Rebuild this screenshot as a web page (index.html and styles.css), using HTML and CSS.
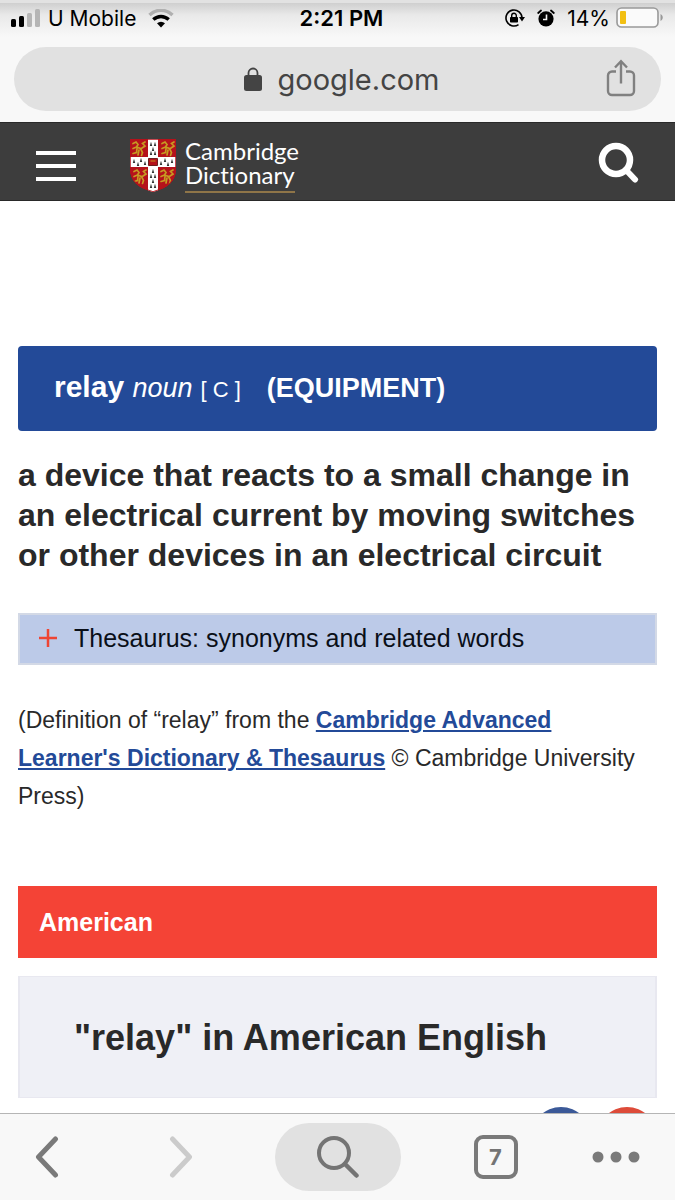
FILE: index.html
```html
<!DOCTYPE html>
<html lang="en">
<head>
    <meta charset="UTF-8">
    <meta name="viewport" content="width=device-width, initial-scale=1.0">
    <title>relay | Cambridge Dictionary</title>
    <link rel="stylesheet" href="styles.css">
</head>
<body>
    <div class="browser-top">
        <div class="status">
            <div class="status-left">
                <svg width="30" height="18" viewBox="0 0 30 18">
                    <rect x="0" y="10" width="5" height="8" rx="1.500"/>
                    <rect x="8" y="7" width="5" height="11" rx="1.500"/>
                    <rect x="16" y="4" width="5" height="14" rx="1.500" fill="#b5b5b5"/>
                    <rect x="24" y="0" width="5" height="18" rx="1.500" fill="#b5b5b5"/>
                </svg>
                <span class="carrier">U Mobile</span>
                <svg width="26" height="19" viewBox="0 0 26 19" fill="none">
                    <path d="M1.500 6C8 -.3 18 -.3 24.500 6" stroke="#b0b0b0" stroke-width="3.400"/>
                    <path d="M5.300 10.600c4.600-4.200 10.800-4.200 15.400 0" stroke="#000" stroke-width="3.400"/>
                    <path d="M9 14.300c2.500-2 5.500-2 8 0L13 18.500z" fill="#000"/>
                </svg>
            </div>
            <span class="time">2:21 PM</span>
            <div class="status-right">
                <svg width="20" height="18" viewBox="0 0 20 18">
                    <path d="M13.500 15.600A8 8 0 1 1 17 9" fill="none" stroke="#000" stroke-width="1.600"/>
                    <path d="M14 8h6l-3 4.500z"/>
                    <rect x="5" y="8" width="8" height="5.500" rx=".8"/>
                    <path d="M6.700 8.500V6.600a2.300 2.300 0 0 1 4.600 0v1.900" fill="none" stroke="#000" stroke-width="1.400"/>
                </svg>
                <svg class="alarm" width="18" height="18" viewBox="0 0 18 18">
                    <circle cx="9" cy="9.800" r="7.600"/>
                    <path d="M1.200 4 4 1.500M16.800 4 14 1.500" stroke="#000" stroke-width="1.800" stroke-linecap="round"/>
                    <path d="M9.500 5.500v5H6" fill="none" stroke="#f2f2f2" stroke-width="1.600"/>
                </svg>
                <span class="percent">14%</span>
                <svg width="48" height="22" viewBox="0 0 48 22">
                    <rect x="1" y="1" width="41" height="19" rx="4.500" fill="#fafafa" stroke="#999" stroke-width="1.600"/>
                    <rect x="4" y="4" width="6" height="13" rx="1" fill="#f2bf12"/>
                    <path d="M44.500 7c3 1.500 3 5.500 0 7z" fill="#999"/>
                </svg>
            </div>
        </div>
        <div class="address">
            <a href="#" class="url">
                <svg width="18" height="24" viewBox="0 0 18 24">
                    <rect x="0" y="8" width="18" height="16" rx="2.500" fill="#444"/>
                    <path d="M4.500 9V6a4.500 4.500 0 0 1 9 0v3" fill="none" stroke="#444" stroke-width="1.800"/>
                </svg>
                google.com
            </a>
            <button class="share" aria-label="Share">
                <svg width="30" height="38" viewBox="0 0 30 38" fill="none" stroke="#808080" stroke-width="2.400">
                    <path d="M10 12.500H6a4 4 0 0 0-4 4V32a4 4 0 0 0 4 4h18a4 4 0 0 0 4-4V16.500a4 4 0 0 0-4-4h-4"/>
                    <path d="M15 24.500V2.500M9 8.500l6-6.300 6 6.300"/>
                </svg>
            </button>
        </div>
    </div>

    <div class="page">
        <header class="header">
            <button class="menu" aria-label="Menu"><i></i><i></i><i></i></button>
            <a href="#" class="logo">
                <svg width="46" height="53" viewBox="0 0 46 53">
                    <defs>
                        <clipPath id="shield"><path d="M0 0h46v30c0 12-8 19-23 23C8 49 0 42 0 30z"/></clipPath>
                        <g id="lion" fill="none" stroke="#c79a22" stroke-width="1.700" stroke-linecap="round">
                            <path d="M2 3.500 5 2l2 2.500-1.500 2.500 4 1.500 2 4-1 3M5.500 7 2 8.500M6 8.500l-.5 4L2 13.500M8 10l-1 5M11 8l3-2-2.500-2.500L14 2"/>
                        </g>
                        <path id="spot" d="M0-2.200 1.200 2H-1.200z" fill="#333"/>
                    </defs>
                    <g clip-path="url(#shield)">
                        <path fill="#b5121b" d="M0 0h46v53H0z"/>
                        <use href="#lion" x="1" y="1"/>
                        <use href="#lion" x="30" y="1"/>
                        <use href="#lion" x="2" y="29"/>
                        <use href="#lion" x="29" y="29"/>
                        <path fill="#fff" d="M18 0h10v53H18zM0 18h46v10H0z"/>
                        <use href="#spot" x="21" y="5"/><use href="#spot" x="25" y="5"/>
                        <use href="#spot" x="23" y="10"/>
                        <use href="#spot" x="21" y="14"/><use href="#spot" x="25" y="14"/>
                        <use href="#spot" x="4" y="22"/><use href="#spot" x="8" y="25"/>
                        <use href="#spot" x="11" y="21"/><use href="#spot" x="15" y="24"/>
                        <use href="#spot" x="31" y="24"/><use href="#spot" x="35" y="21"/>
                        <use href="#spot" x="38" y="25"/><use href="#spot" x="42" y="22"/>
                        <use href="#spot" x="23" y="32"/>
                        <use href="#spot" x="21" y="37"/><use href="#spot" x="25" y="37"/>
                        <use href="#spot" x="23" y="42"/>
                        <use href="#spot" x="21" y="47"/><use href="#spot" x="25" y="47"/>
                        <path fill="#b5121b" stroke="#6d2020" d="M18.500 19.500h9v7h-9z"/>
                        <path stroke="#c79a22" d="M20.500 22h5"/>
                        <path fill="none" stroke="#b5121b" stroke-width="1.500" d="M0 0h46v30c0 12-8 19-23 23C8 49 0 42 0 30z"/>
                    </g>
                </svg>
                <span class="logo-text">
                    <span>Cambridge</span>
                    <span class="underline">Dictionary</span>
                </span>
            </a>
            <button class="find" aria-label="Search">
                <svg width="42" height="42" viewBox="0 0 42 42" fill="none" stroke="#fff">
                    <circle cx="19" cy="19" r="14" stroke-width="6.500"/>
                    <path d="m29 29 9 9.500" stroke-width="6" stroke-linecap="round"/>
                </svg>
            </button>
        </header>

        <main class="entry">
            <h2 class="sense">
                <span class="word">relay <em>noun</em></span>
                <span class="gram">[ <small>C</small> ]</span>
                <span class="guide">(EQUIPMENT)</span>
            </h2>
            <p class="definition">a device that reacts to a small change in an electrical current by moving switches or other devices in an electrical circuit</p>
            <button class="thesaurus">
                <svg width="18" height="18" viewBox="0 0 18 18" stroke="#ee4534" stroke-width="2.500"><path d="M9 0v18M0 9h18"/></svg>
                Thesaurus: synonyms and related words
            </button>
            <p class="source">(Definition of “relay” from the <a href="#">Cambridge Advanced Learner's Dictionary &amp; Thesaurus</a> © Cambridge University Press)</p>
            <div class="region">American</div>
            <h1 class="title">"relay" in American English</h1>
            <div class="social">
                <a href="#" class="facebook" aria-label="Facebook"></a>
                <a href="#" class="google" aria-label="Google"></a>
            </div>
        </main>
    </div>

    <nav class="toolbar">
        <button aria-label="Back">
            <svg width="24" height="42" viewBox="0 0 24 42" fill="none" stroke="#7a7a7a" stroke-width="5" stroke-linecap="round" stroke-linejoin="round"><path d="M20.500 3 3.500 21l17 18"/></svg>
        </button>
        <button aria-label="Forward">
            <svg width="24" height="42" viewBox="0 0 24 42" fill="none" stroke="#cbcbcb" stroke-width="5" stroke-linecap="round" stroke-linejoin="round"><path d="m3.500 3 17 18-17 18"/></svg>
        </button>
        <button class="search" aria-label="Search or type URL">
            <svg width="42" height="42" viewBox="0 0 42 42" fill="none" stroke="#747474">
                <circle cx="17" cy="17" r="15" stroke-width="4"/>
                <path d="m28 28 11.500 11.500" stroke-width="4.500" stroke-linecap="round"/>
            </svg>
        </button>
        <button aria-label="7 open tabs"><span class="tabs">7</span></button>
        <button aria-label="More">
            <svg width="48" height="12" viewBox="0 0 48 12" fill="#7a7a7a"><circle cx="6" cy="6" r="5.500"/><circle cx="24" cy="6" r="5.500"/><circle cx="42" cy="6" r="5.500"/></svg>
        </button>
    </nav>
</body>
</html>
```
FILE: styles.css
```css
* {
    box-sizing: border-box;
}

body {
    display: flex;
    flex-direction: column;
    height: 100vh;
    margin: 0;
    background-color: #fff;
    color: #292929;
    font-family: "Liberation Sans", Arial, sans-serif;
}

h1, h2, p {
    margin: 0;
}

button {
    border: none;
    padding: 0;
    background: none;
    font: inherit;
    cursor: pointer;
}

svg {
    display: block;
    flex-shrink: 0;
}

.browser-top {
    flex-shrink: 0;
    border-top: 3px solid #e2e2e2;
    padding: 0 14px 11px;
    background: linear-gradient(#cfcfcf, #e9e9e9 12px, #f8f8f8 34px);
    font-family: Inter, sans-serif;
}

.status {
    display: grid;
    grid-template-columns: 1fr auto 1fr;
    align-items: center;
    height: 44px;
    padding-bottom: 14px;
    margin: 0 -3px;
    color: #000;
    font-size: 21px;
}

.status-left, .status-right {
    display: flex;
    align-items: center;
}

.carrier {
    margin: 0 12px 0 7px;
}

.time {
    padding-left: 8px;
    font-size: 22px;
    font-weight: 600;
}

.status-right {
    justify-content: flex-end;
}

.alarm {
    margin: 0 12px;
}

.percent {
    margin-right: 6px;
}

.address {
    display: flex;
    align-items: center;
    justify-content: center;
    position: relative;
    height: 64px;
    border-radius: 32px;
    background-color: #e1e1e1;
}

.url {
    display: flex;
    align-items: center;
    gap: 16px;
    padding-left: 8px;
    color: #444;
    font-size: 29px;
    text-decoration: none;
}

.share {
    position: absolute;
    right: 25px;
    top: 12px;
}

.page {
    flex: 1;
    min-height: 0;
    overflow: hidden;
}

.header {
    display: flex;
    align-items: center;
    height: 79px;
    padding: 0 36px;
    border-top: 1px solid #292929;
    border-bottom: 1px solid #292929;
    background-color: #3d3d3d;
}

.menu {
    display: flex;
    flex-direction: column;
    gap: 9px;
    width: 40px;
    margin-top: 8px;
}

.menu i {
    height: 4px;
    background-color: #fff;
}

.logo {
    display: flex;
    align-items: center;
    gap: 9px;
    margin: 8px auto 0 54px;
    color: #fff;
    text-decoration: none;
}

.logo-text {
    display: flex;
    flex-direction: column;
    align-items: flex-start;
    font-family: Lato, sans-serif;
    font-size: 24px;
    font-variant-ligatures: none;
    line-height: 24px;
}

.underline {
    padding-bottom: 4px;
    border-bottom: 2px solid #8f7548;
}

.entry {
    padding: 145px 18px 0;
}

.sense {
    display: flex;
    align-items: baseline;
    height: 85px;
    padding: 24px 36px 0;
    border-radius: 4px;
    background-color: #234a98;
    color: #fff;
    font-size: 27px;
}

.word {
    font-size: 30px;
}

.word em {
    font-size: 27px;
    font-weight: normal;
}

.gram {
    margin: 0 26px 0 8px;
    font-size: 22px;
    font-weight: normal;
}

.gram small {
    font-size: 22px;
}

.definition {
    padding: 24px 0 38px;
    font-size: 32px;
    font-weight: bold;
    line-height: 40px;
}

.thesaurus {
    display: flex;
    align-items: center;
    gap: 17px;
    width: 100%;
    height: 52px;
    padding: 0 19px 2px;
    border: 2px solid #d3d9e6;
    background-color: #bccae8;
    color: #0a0f18;
    font-size: 25px;
}

.source {
    padding: 36px 0 71px;
    font-size: 23px;
    line-height: 38px;
}

.source a {
    color: #234a98;
    font-weight: bold;
}

.region {
    padding: 0 21px;
    background-color: #f44336;
    color: #fff;
    font-size: 25px;
    font-weight: bold;
    line-height: 72px;
}

.title {
    margin-top: 18px;
    padding: 2px 54px 0;
    border: solid #e8e8f0;
    border-width: 1px 2px;
    background-color: #eff0f6;
    font-size: 36px;
    line-height: 118px;
}

.social {
    display: flex;
    justify-content: flex-end;
    gap: 6px;
    padding-top: 9px;
}

.social a {
    width: 60px;
    height: 60px;
    border-radius: 50%;
}

.facebook {
    background-color: #3b5998;
}

.google {
    background-color: #dd4b39;
}

.toolbar {
    display: grid;
    grid-template-columns: 94px 1fr 142px 1fr 68px;
    align-items: center;
    flex-shrink: 0;
    height: 87px;
    padding-right: 25px;
    border-top: 1px solid #b5b5b5;
    background-color: #f8f8f8;
}

.toolbar button {
    display: flex;
    align-items: center;
    justify-content: center;
    height: 68px;
}

.toolbar .search {
    margin: 0 8px;
    border-radius: 34px;
    background-color: #e1e1e1;
}

.tabs {
    width: 44px;
    height: 44px;
    border: 4px solid #7a7a7a;
    border-radius: 9px;
    color: #747474;
    font-family: Inter, sans-serif;
    font-size: 22px;
    font-weight: 700;
    line-height: 36px;
    text-align: center;
}
```
